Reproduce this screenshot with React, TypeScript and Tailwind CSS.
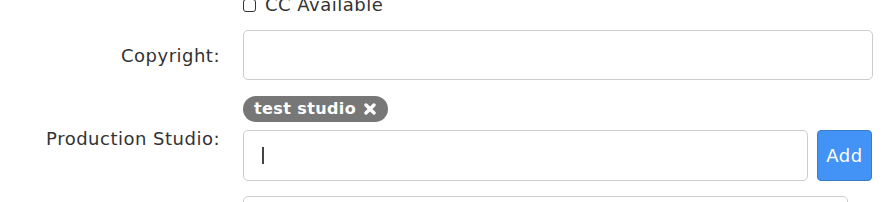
import React, { useState } from 'react';

const labelCls = 'w-[220px] shrink-0 text-right text-[18px] tracking-[0.5px] text-[#333]';

const App: React.FC = () => {
  const [studios, setStudios] = useState<string[]>(['test studio']);
  const [draft, setDraft] = useState('');
  const [cc, setCc] = useState(false);

  const addStudio = () => {
    if (!draft.trim()) return;
    setStudios([...studios, draft.trim()]);
    setDraft('');
  };

  return (
    <div className="w-[892px] h-[202px] overflow-hidden bg-white font-['DejaVu_Sans',sans-serif] text-[#333]">
      <div className="-mt-[7px] flex flex-col">
        {/* CC checkbox */}
        <div className="flex h-[24px] items-center">
          <div className={labelCls}></div>
          <label className="ml-[23px] flex items-center gap-[9px] text-[18px] leading-none tracking-[0.5px]">
            <input
              type="checkbox"
              checked={cc}
              onChange={(e) => setCc(e.target.checked)}
              className="h-[13px] w-[13px] appearance-none rounded-[3px] border border-[#333] bg-white"
            />
            CC Available
          </label>
        </div>

        {/* Copyright */}
        <div className="mt-[13px] flex items-center">
          <div className={labelCls}>Copyright:</div>
          <input
            type="text"
            className="ml-[23px] h-[50px] w-[630px] rounded-[5px] border border-[#ccc] px-[16px] text-[17px] outline-none"
          />
        </div>

        {/* Production Studio */}
        <div className="mt-[16px] flex items-center">
          <div className={labelCls}>Production Studio:</div>
          <div className="ml-[23px] flex flex-col">
            <div className="flex gap-[6px]">
              {studios.map((s, i) => (
                <span
                  key={i}
                  className="flex h-[26px] items-center gap-[8px] rounded-full bg-[#777] pl-[11px] pr-[12px] text-[16px] font-bold tracking-[0.4px] text-white"
                >
                  {s}
                  <button
                    onClick={() => setStudios(studios.filter((_, j) => j !== i))}
                    className="flex items-center"
                  >
                    <svg width="12" height="12" viewBox="0 0 12 12">
                      <path d="M2 2 L10 10 M10 2 L2 10" stroke="white" strokeWidth="3.4" strokeLinecap="round" />
                    </svg>
                  </button>
                </span>
              ))}
            </div>
            <div className="mt-[8px] flex gap-[9px]">
              <div className="relative">
                <input
                  type="text"
                  value={draft}
                  onChange={(e) => setDraft(e.target.value)}
                  className="h-[51px] w-[565px] rounded-[5px] border border-[#ccc] px-[18px] text-[17px] outline-none"
                />
                {draft === '' && (
                  <span className="pointer-events-none absolute left-[19px] top-[17px] h-[17px] w-[2px] bg-[#444]"></span>
                )}
              </div>
              <button
                onClick={addStudio}
                className="h-[51px] w-[55px] rounded-[4px] border border-[#3a7cc8] bg-[#4293f5] text-[18px] tracking-[0.5px] text-white"
              >
                Add
              </button>
            </div>
          </div>
        </div>

        {/* Next field */}
        <div className="mt-[15px] flex items-center">
          <div className={labelCls}></div>
          <input
            type="text"
            className="ml-[23px] h-[50px] w-[605px] rounded-[5px] border border-[#ccc] px-[16px] text-[17px] outline-none"
          />
        </div>
      </div>
    </div>
  );
};

export default App;
